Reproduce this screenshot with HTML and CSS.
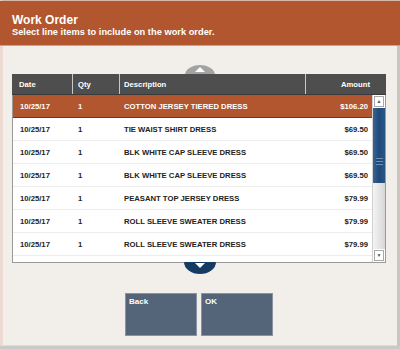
FILE: index.html
```html
<!DOCTYPE html>
<html lang="en">
<head>
	<meta charset="UTF-8">
	<title>Work Order</title>
	<link rel="stylesheet" href="styles.css">
</head>
<body>
	<div class="frame">
		<div class="header">
			<h1>Work Order</h1>
			<p>Select line items to include on the work order.</p>
		</div>
		<div class="content">
			<div class="grid">
				<div class="arrow up"><span></span></div>
				<div class="head">
					<div class="c-date">Date</div>
					<div class="c-qty">Qty</div>
					<div class="c-desc">Description</div>
					<div class="c-amt">Amount</div>
				</div>
				<div class="body">
					<div class="rows">
						<div class="row sel">
							<div class="c-date">10/25/17</div><div class="c-qty">1</div><div class="c-desc">COTTON JERSEY TIERED DRESS</div><div class="c-amt">$106.20</div>
						</div>
						<div class="row">
							<div class="c-date">10/25/17</div><div class="c-qty">1</div><div class="c-desc">TIE WAIST SHIRT DRESS</div><div class="c-amt">$69.50</div>
						</div>
						<div class="row">
							<div class="c-date">10/25/17</div><div class="c-qty">1</div><div class="c-desc">BLK WHITE CAP SLEEVE DRESS</div><div class="c-amt">$69.50</div>
						</div>
						<div class="row">
							<div class="c-date">10/25/17</div><div class="c-qty">1</div><div class="c-desc">BLK WHITE CAP SLEEVE DRESS</div><div class="c-amt">$69.50</div>
						</div>
						<div class="row">
							<div class="c-date">10/25/17</div><div class="c-qty">1</div><div class="c-desc">PEASANT TOP JERSEY DRESS</div><div class="c-amt">$79.99</div>
						</div>
						<div class="row">
							<div class="c-date">10/25/17</div><div class="c-qty">1</div><div class="c-desc">ROLL SLEEVE SWEATER DRESS</div><div class="c-amt">$79.99</div>
						</div>
						<div class="row">
							<div class="c-date">10/25/17</div><div class="c-qty">1</div><div class="c-desc">ROLL SLEEVE SWEATER DRESS</div><div class="c-amt">$79.99</div>
						</div>
						<div class="row last"></div>
					</div>
					<div class="scroll">
						<div class="sbtn">&#9650;</div>
						<div class="thumb"><i></i></div>
						<div class="track"></div>
						<div class="sbtn">&#9660;</div>
					</div>
				</div>
				<div class="arrow down"><span></span></div>
			</div>
			<div class="buttons">
				<div class="btn">Back</div>
				<div class="btn">OK</div>
			</div>
		</div>
	</div>
</body>
</html>
```

FILE: styles.css
```css
*{
	margin: 0;
	padding: 0;
	box-sizing: border-box;
}
body{
	width: 400px;
	height: 349px;
	overflow: hidden;
	background: #c9c9c9;
	font-family: "Liberation Sans", Arial, sans-serif;
}
.frame{
	width: 400px;
	height: 346px;
	background: #f2efea;
	border-top: 1px solid #d9b7a6;
	border-left: 3px solid #ecd9d1;
	border-right: 3px solid #c9c6c1;
	display: flex;
	flex-direction: column;
}
.header{
	height: 45px;
	margin-left: -3px;
	margin-right: -3px;
	background: #b1562e;
	color: #fff;
	padding: 12px 12px 0;
	border-bottom: 1px solid #cfa08a;
}
.header h1{
	font-size: 12px;
	font-weight: bold;
	line-height: 14px;
}
.header p{
	font-size: 9.3px;
	font-weight: bold;
	line-height: 11px;
}
.content{
	flex: 1;
	padding: 28px 11px 0 9px;
	border-bottom: 1px solid #e4dbd4;
}
.grid{
	position: relative;
	width: 374px;
	border: 1px solid #9a9a9a;
	border-top: none;
	background: #fff;
}
.arrow{
	position: absolute;
	left: 172px;
	width: 30px;
	height: 20px;
	border-radius: 50%;
	display: flex;
	justify-content: center;
}
.arrow.up{
	top: -9px;
	background: #a3a3a3;
	z-index: 0;
}
.arrow.up span{
	margin-top: 2px;
	width: 0;
	height: 0;
	border-left: 5px solid transparent;
	border-right: 5px solid transparent;
	border-bottom: 5px solid #fff;
}
.arrow.down{
	bottom: -12px;
	left: 171px;
	width: 32px;
	height: 24px;
	background: #163b63;
	z-index: 0;
	align-items: flex-end;
}
.arrow.down span{
	margin-bottom: 6px;
	width: 0;
	height: 0;
	border-left: 5px solid transparent;
	border-right: 5px solid transparent;
	border-top: 5px solid #fff;
}
.head{
	position: relative;
	z-index: 1;
	display: flex;
	height: 21px;
	margin: 0 -1px;
	background: #4e4e4e;
	color: #fff;
	font-size: 7.7px;
	font-weight: bold;
	align-items: stretch;
	border-bottom: 1px solid #3a3a3a;
}
.head div{
	display: flex;
	align-items: center;
	border-right: 1px solid #c8c8c8;
}
.head .c-amt{
	border-right: none;
	padding-right: 16px;
}
.c-date{
	width: 61px;
	padding-left: 7px;
}
.c-qty{
	width: 47px;
	padding-left: 5px;
}
.c-desc{
	width: 186px;
	padding-left: 4px;
}
.c-amt{
	flex: 1;
	justify-content: flex-end;
	text-align: right;
}
.body{
	position: relative;
	z-index: 1;
	display: flex;
	height: 167px;
	overflow: hidden;
	background: #fff;
}
.rows{
	flex: 1;
}
.row{
	display: flex;
	align-items: center;
	height: 23px;
	padding-top: 1px;
	border-bottom: 1px solid #ececec;
	font-size: 7.7px;
	font-weight: bold;
	color: #222;
}
.row.sel{
	background: #b1562e;
	color: #fff;
	border-bottom: 1px solid #6a3a24;
}
.row .c-date{
	width: 60px;
}
.row .c-amt{
	padding-right: 4px;
}
.scroll{
	width: 13px;
	display: flex;
	flex-direction: column;
	border-left: 1px solid #d0d0d0;
}
.sbtn{
	height: 11px;
	margin: 1px;
	border: 1px solid #a8a8a8;
	background: #fff;
	font-size: 5px;
	color: #555;
	text-align: center;
	line-height: 9px;
}
.thumb{
	height: 75px;
	background: linear-gradient(to right, #3a6391, #1f4a7c 50%, #2a5585);
	display: flex;
	align-items: flex-end;
	justify-content: center;
	padding-bottom: 18px;
}
.thumb i{
	width: 7px;
	height: 7px;
	border-top: 1px solid #6f8fb0;
	border-bottom: 1px solid #6f8fb0;
	background: linear-gradient(#1f4a7c 2px, #6f8fb0 2px, #6f8fb0 3px, #1f4a7c 3px);
}
.track{
	flex: 1;
	background: linear-gradient(to right, #f4f4f4, #d6d6d6);
}
.buttons{
	display: flex;
	justify-content: center;
	gap: 4px;
	margin-top: 30px;
}
.btn{
	width: 72px;
	height: 43px;
	background: #546479;
	border: 1px solid #8a94a0;
	color: #fff;
	font-size: 8px;
	font-weight: bold;
	padding: 3px 3px;
}
```
